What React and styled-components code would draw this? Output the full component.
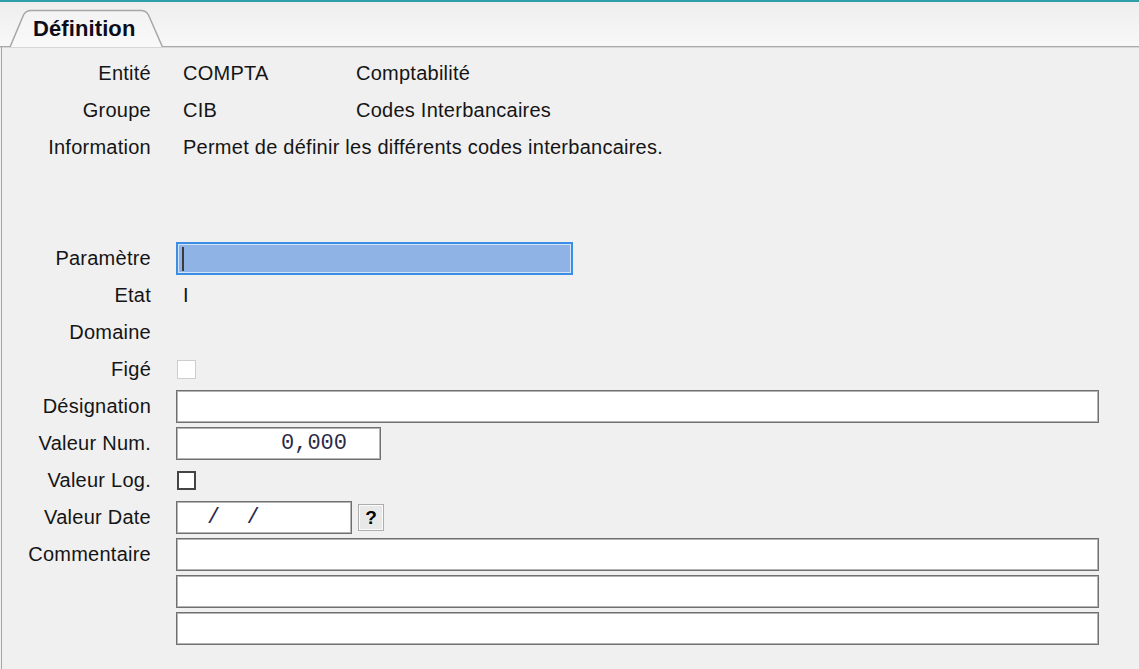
import React from "react";
import styled, { createGlobalStyle } from "styled-components";

const Global = createGlobalStyle`
  html, body { margin: 0; padding: 0; background: #f0f0f0; }
  body { font-family: "Liberation Sans", Arial, sans-serif; color: #111; }
  #root { width: 1139px; height: 669px; overflow: hidden; }
`;

const Page = styled.div`
  width: 1139px;
  height: 669px;
  display: flex;
  flex-direction: column;
  background: #f0f0f0;
`;

const TabStrip = styled.div`
  height: 44px;
  border-top: 2px solid #2f9ea9;
  border-bottom: 1px solid #a9a9a9;
  background: linear-gradient(#eeeeee, #f8f8f8);
  display: flex;
  align-items: flex-end;
  padding-left: 9px;
  box-shadow: 0 1px 0 #d6d6d6;
`;

const Tab = styled.div`
  position: relative;
  width: 155px;
  height: 38px;
  margin-bottom: -1px;
  display: flex;
  align-items: center;
  justify-content: flex-start;
  padding-left: 24px;
  box-sizing: border-box;
  font-weight: bold;
  font-size: 22px;
  color: #0d0d1a;
  letter-spacing: 0.1px;
`;

const TabShape = styled.svg`
  position: absolute;
  left: 0;
  top: 0;
  z-index: 0;
`;

const TabLabel = styled.span`
  position: relative;
  z-index: 1;
  margin-top: 2px;
`;

const Panel = styled.div`
  flex: 1;
  border-left: 1px solid #a4a4a4;
  margin-left: 1px;
  padding: 8px 40px 0 0;
`;

const Form = styled.div`
  display: grid;
  grid-template-columns: 149px 1fr;
  grid-auto-rows: 37px;
  column-gap: 25px;
  align-items: center;
  font-size: 20px;
`;

const Label = styled.div`
  text-align: right;
  white-space: nowrap;
  letter-spacing: 0.25px;
  color: #151515;
`;

const Value = styled.div`
  display: flex;
  padding-left: 7px;
  white-space: nowrap;
  letter-spacing: 0.25px;
  color: #151515;
`;

const Code = styled.span`
  width: 173px;
`;

const Field = styled.div`
  box-sizing: border-box;
  height: 33px;
  width: ${(p) => p.$w || "100%"};
  background: #fff;
  border: 1px solid #707070;
  box-shadow: inset 0 0 0 1px #b4b4b4;
  display: flex;
  align-items: center;
  font-family: "Liberation Mono", "Courier New", monospace;
  font-size: 22px;
  color: #2a2a48;
  white-space: pre;
  justify-content: ${(p) => (p.$right ? "flex-end" : "flex-start")};
  padding: ${(p) => (p.$right ? "0 33px 0 0" : "0 0 0 30px")};
`;

const FocusField = styled.div`
  box-sizing: border-box;
  height: 33px;
  width: 397px;
  border: 2px solid #3a8ee6;
  background: #8fb3e4;
  box-shadow: inset 0 0 0 1px #d4e3f6;
  display: flex;
  align-items: center;
  padding-left: 4px;
`;

const Caret = styled.span`
  width: 2px;
  height: 24px;
  background: #3b3b3b;
`;

const Check = styled.div`
  box-sizing: border-box;
  width: 19px;
  height: 19px;
  margin-left: 1px;
  background: #fff;
  border: ${(p) => (p.$disabled ? "1px solid #cdcdcd" : "2px solid #444")};
`;

const InlineRow = styled.div`
  display: flex;
  align-items: center;
  gap: 6px;
`;

const HelpButton = styled.div`
  box-sizing: border-box;
  width: 26px;
  height: 27px;
  border: 1px solid #adadad;
  background: #e8e8e8;
  box-shadow: inset 0 0 0 1px #fbfbfb;
  display: flex;
  align-items: center;
  justify-content: center;
  font-weight: bold;
  font-size: 19px;
  color: #000;
`;

const Empty = styled.div``;

export default function App() {
  return (
    <Page>
      <Global />
      <TabStrip>
        <Tab>
          <TabShape width="155" height="38" viewBox="0 0 155 38">
            <defs>
              <linearGradient id="tg" x1="0" y1="0" x2="0" y2="1">
                <stop offset="0" stopColor="#f3f3f3" />
                <stop offset="1" stopColor="#f9f9f9" />
              </linearGradient>
            </defs>
            <path
              d="M1 38 L14.5 6 Q17 1.5 22 1.5 L132 1.5 Q137 1.5 139.5 6 L153.5 38 Z"
              fill="url(#tg)"
              stroke="none"
            />
            <path
              d="M1 38 L14.5 6 Q17 1.5 22 1.5 L132 1.5 Q137 1.5 139.5 6 L153.5 38"
              fill="none"
              stroke="#a6a6a6"
              strokeWidth="1.5"
            />
          </TabShape>
          <TabLabel>Définition</TabLabel>
        </Tab>
      </TabStrip>
      <Panel>
        <Form>
          <Label>Entité</Label>
          <Value>
            <Code>COMPTA</Code>Comptabilité
          </Value>
          <Label>Groupe</Label>
          <Value>
            <Code>CIB</Code>Codes Interbancaires
          </Value>
          <Label>Information</Label>
          <Value>Permet de définir les différents codes interbancaires.</Value>
          <Empty />
          <Empty />
          <Empty />
          <Empty />
          <Label>Paramètre</Label>
          <div>
            <FocusField>
              <Caret />
            </FocusField>
          </div>
          <Label>Etat</Label>
          <Value>I</Value>
          <Label>Domaine</Label>
          <Value />
          <Label>Figé</Label>
          <div>
            <Check $disabled />
          </div>
          <Label>Désignation</Label>
          <Field />
          <Label>Valeur Num.</Label>
          <Field $w="205px" $right>
            0,000
          </Field>
          <Label>Valeur Log.</Label>
          <div>
            <Check />
          </div>
          <Label>Valeur Date</Label>
          <InlineRow>
            <Field $w="176px">{"/  /"}</Field>
            <HelpButton>?</HelpButton>
          </InlineRow>
          <Label>Commentaire</Label>
          <Field />
          <Empty />
          <Field />
          <Empty />
          <Field />
        </Form>
      </Panel>
    </Page>
  );
}
